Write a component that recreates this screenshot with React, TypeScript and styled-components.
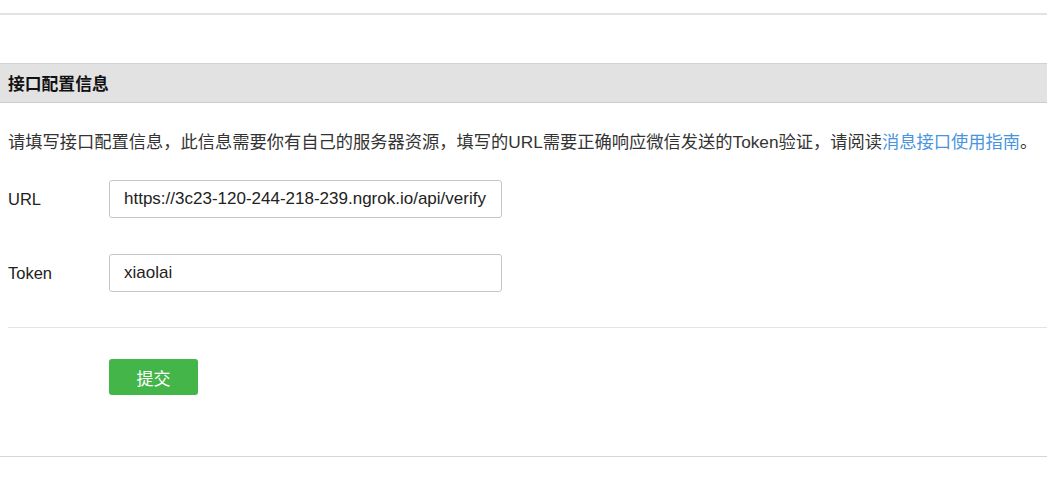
import React from 'react';
import styled, { createGlobalStyle } from 'styled-components';

const GlobalStyle = createGlobalStyle`
  html, body {
    margin: 0;
    padding: 0;
    background: #fff;
  }
  body {
    font-family: "Liberation Sans", "Noto Sans CJK SC", sans-serif;
    color: #222;
  }
`;

const Page = styled.div`
  width: 1047px;
  padding-top: 13px;
`;

const TopRule = styled.div`
  height: 2px;
  background: #e2e2e2;
`;

const SectionHeader = styled.div`
  margin-top: 48px;
  height: 38px;
  display: flex;
  align-items: center;
  padding-left: 8px;
  background: #e2e2e2;
  border-top: 1px solid #d2d2d2;
  border-bottom: 1px solid #cdcdcd;
  font-size: 16.8px;
  font-weight: 700;
  color: #111;
`;

const Body = styled.div`
  padding-left: 8px;
`;

const Intro = styled.p`
  margin: 27px 0 0;
  font-size: 17.25px;
  line-height: 24px;
  color: #333;
  white-space: nowrap;
`;

const Guide = styled.a`
  color: #4894e0;
  text-decoration: none;
`;

const Form = styled.div`
  margin-top: 26px;
  display: flex;
  flex-direction: column;
  gap: 36px;
`;

const Row = styled.div`
  display: flex;
  align-items: center;
`;

const Label = styled.label`
  width: 101px;
  font-size: 16.5px;
  color: #222;
`;

const Field = styled.input`
  box-sizing: border-box;
  width: 393px;
  height: 38px;
  padding: 0 14px;
  border: 1px solid #c6c6c6;
  border-radius: 3px;
  font-family: "Liberation Sans", sans-serif;
  font-size: 17px;
  color: #222;
  background: #fff;
  outline: none;
`;

const Divider = styled.div`
  margin-top: 35px;
  height: 1px;
  background: #e4e4e4;
`;

const Actions = styled.div`
  padding: 31px 0 61px 101px;
`;

const SubmitButton = styled.button`
  width: 89px;
  height: 36px;
  border: none;
  border-radius: 3px;
  background: #44b549;
  color: #fff;
  font-family: "Noto Sans CJK SC", sans-serif;
  font-size: 17px;
  cursor: pointer;
`;

const BottomRule = styled.div`
  height: 1px;
  background: #d6d6d6;
`;

export default function App() {
  return (
    <Page>
      <GlobalStyle />
      <TopRule />
      <SectionHeader>接口配置信息</SectionHeader>
      <Body>
        <Intro>
          请填写接口配置信息，此信息需要你有自己的服务器资源，填写的URL需要正确响应微信发送的Token验证，请阅读
          <Guide href="#">消息接口使用指南</Guide>。
        </Intro>
        <Form>
          <Row>
            <Label>URL</Label>
            <Field defaultValue="https://3c23-120-244-218-239.ngrok.io/api/verify" />
          </Row>
          <Row>
            <Label>Token</Label>
            <Field defaultValue="xiaolai" />
          </Row>
        </Form>
        <Divider />
        <Actions>
          <SubmitButton>提交</SubmitButton>
        </Actions>
      </Body>
      <BottomRule />
    </Page>
  );
}
